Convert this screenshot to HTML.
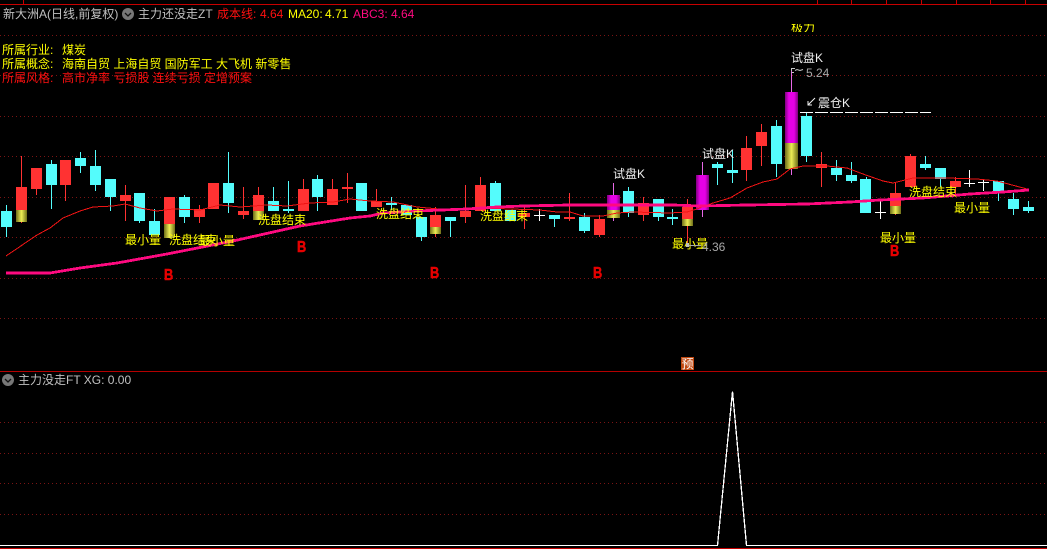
<!DOCTYPE html>
<html><head><meta charset="utf-8">
<style>
html,body{margin:0;padding:0;background:#000;width:1047px;height:549px;overflow:hidden}
svg{display:block;position:absolute;left:0;top:0}
text{font-family:"Liberation Sans","WenQuanYi Zen Hei","Noto Sans CJK SC",sans-serif;font-size:12px;white-space:pre;text-rendering:optimizeSpeed}
.y{fill:#ffff00}.w{fill:#f0f0f0}.g{fill:#c0c0c0}.r{fill:#ff1010}
.b{fill:#e60000;stroke:#e60000;stroke-width:.5;font-size:16px;font-weight:bold}
</style></head><body>
<svg width="1047" height="549" viewBox="0 0 1047 549" xmlns="http://www.w3.org/2000/svg">
<defs>
<linearGradient id="au" x1="0" x2="1" y1="0" y2="0"><stop offset="0" stop-color="#6e6e18"/><stop offset=".5" stop-color="#eeee55"/><stop offset="1" stop-color="#6e6e18"/></linearGradient>
<linearGradient id="mg" x1="0" x2="1" y1="0" y2="0"><stop offset="0" stop-color="#800080"/><stop offset=".3" stop-color="#e600e6"/><stop offset=".7" stop-color="#e600e6"/><stop offset="1" stop-color="#800080"/></linearGradient>
<clipPath id="clipTop"><rect x="780" y="24" width="50" height="8"/></clipPath>
</defs>
<rect width="1047" height="549" fill="#000"/>
<g shape-rendering="crispEdges">
<rect x="0" y="4" width="1047" height="1" fill="#c80000"/>
<path d="M23.500 0V4M817.500 0V4M851.500 0V4M886.500 0V4M921.500 0V4M956.500 0V4M990.500 0V4M1025.500 0V4" stroke="#c80000" fill="none"/>
<rect x="0" y="371" width="1047" height="1" fill="#b40000"/>
<rect x="0" y="548" width="1047" height="1" fill="#c80000"/>
<path d="M0 35.500H1047M0 75.500H1047M0 116.500H1047M0 156.500H1047M0 197.500H1047M0 237.500H1047M0 278.500H1047M0 318.500H1047M0 422.500H1047M0 453.500H1047M0 483.500H1047M0 514.500H1047" stroke="#7a1414" stroke-dasharray="1 3" fill="none"/>
<!-- red wicks -->
<path stroke="#ff3232" fill="none" d="M21.500 156V223M36.500 189V195M65.500 185V201M125.500 185V221M199.500 205V223M243.500 187V219M258.500 187V195M303.500 179V189M332.500 179V189M347.500 173V203M376.500 189V201M435.500 207V237M465.500 185V223M480.500 177V185M524.500 205V229M569.500 193V221M599.500 215V237M643.500 197V221M687.500 199V247M746.500 136V181M761.500 124V166M821.500 152V187M895.500 182V215M910.500 154V156M955.500 177V195"/>
<!-- cyan wicks -->
<path stroke="#54fcfc" fill="none" d="M6.500 205V237M51.500 160V209M80.500 152V173M95.500 150V191M110.500 197V211M139.500 221V223M154.500 209V221M184.500 195V223M228.500 152V213M273.500 187V201M288.500 181V213M317.500 175V211M391.500 197V210M421.500 237V241M450.500 221V237M495.500 181V183M554.500 219V227M584.500 213V233M628.500 187V217M658.500 217V221M672.500 209V225M717.500 162V185M732.500 150V183M776.500 120V177M806.500 112V162M836.500 160V181M851.500 162V183M866.500 177V179M925.500 156V170M940.500 179V187M998.500 192V201M1013.500 193V215M1028.500 201V213"/>
<!-- magenta wicks -->
<path stroke="#e868e8" fill="none" d="M613.500 183V221M702.500 162V217M791.500 68V175"/>
<!-- white crosses -->
<path stroke="#fff" fill="none" d="M539.500 209V221M534 215.500H545M880.500 201V219M875 212.500H886M969.500 170V187M964 183.500H975M983.500 179V191M978 182.500H989"/>
<!-- red bodies -->
<path fill="#ff3232" d="M16 187h11v23h-11zM31 168h11v21h-11zM60 160h11v25h-11zM120 195h11v6h-11zM164 197h11v27h-11zM194 209h11v8h-11zM208 183h11v26h-11zM238 211h11v4h-11zM253 195h11v16h-11zM298 189h11v22h-11zM327 189h11v16h-11zM342 187h11v2h-11zM371 201h11v6h-11zM430 215h11v12h-11zM460 211h11v6h-11zM475 185h11v26h-11zM519 213h11v4h-11zM564 217h11v2h-11zM594 219h11v16h-11zM638 203h11v12h-11zM682 207h11v12h-11zM741 148h11v22h-11zM756 132h11v14h-11zM816 164h11v4h-11zM890 193h11v13h-11zM905 156h11v31h-11zM950 181h11v6h-11z"/>
<!-- cyan bodies -->
<path fill="#54fcfc" d="M1 211h11v16h-11zM46 164h11v21h-11zM75 158h11v8h-11zM90 166h11v19h-11zM105 179h11v18h-11zM134 193h11v28h-11zM149 221h11v14h-11zM179 197h11v20h-11zM223 183h11v20h-11zM268 201h11v10h-11zM283 209h11v2h-11zM312 179h11v18h-11zM356 183h11v28h-11zM386 203h11v2h-11zM401 205h11v10h-11zM416 217h11v20h-11zM445 217h11v4h-11zM490 183h11v28h-11zM505 210h11v11h-11zM549 215h11v4h-11zM579 217h11v14h-11zM623 191h11v22h-11zM653 199h11v18h-11zM667 217h11v2h-11zM712 164h11v4h-11zM727 170h11v3h-11zM771 126h11v38h-11zM801 116h11v40h-11zM831 168h11v7h-11zM846 175h11v6h-11zM860 179h11v34h-11zM920 164h11v4h-11zM935 168h11v11h-11zM993 181h11v11h-11zM1008 199h11v10h-11zM1023 207h11v4h-11z"/>
<!-- magenta bodies -->
<rect x="607" y="195" width="13" height="15" fill="url(#mg)"/>
<rect x="696" y="175" width="13" height="35" fill="url(#mg)"/>
<rect x="785" y="92" width="13" height="51" fill="url(#mg)"/>
<!-- gold -->
<rect x="16" y="210" width="11" height="12" fill="url(#au)"/>
<rect x="164" y="224" width="11" height="14" fill="url(#au)"/>
<rect x="253" y="211" width="11" height="9" fill="url(#au)"/>
<rect x="430" y="227" width="11" height="7" fill="url(#au)"/>
<rect x="607" y="210" width="13" height="8" fill="url(#au)"/>
<rect x="682" y="219" width="11" height="7" fill="url(#au)"/>
<rect x="785" y="143" width="13" height="26" fill="url(#au)"/>
<rect x="890" y="206" width="11" height="8" fill="url(#au)"/>
</g>
<!-- thin MA -->
<polyline shape-rendering="crispEdges" fill="none" stroke="#f01414" stroke-width="1" points="6,256 37,235 50,228 63,218 80,211 93,207 113,206 125,204 140,208 157,211 173,209 200,210 220,205 240,207 267,205 287,206 310,203 333,202 350,199 370,201 393,202 417,207 450,210 483,208 540,210 557,212 570,212 583,216 603,216 617,213 633,212 670,213 687,212 697,209 713,203 730,198 747,188 763,182 777,179 790,169 803,166 827,166 847,168 863,174 883,181 893,183 913,178 947,178 977,179 997,181 1027,189"/>
<!-- thick MA -->
<polyline shape-rendering="crispEdges" fill="none" stroke="#ff0a80" stroke-width="2.800" points="6,273 50,273 80,268 117,263 167,254 233,241 300,226 350,218 370,216 383,213 417,211 467,209 497,207 523,206 570,205 673,205 700,206 747,205 807,204 850,202 880,200 923,198 970,194 1003,192 1029,190"/>
<!-- dashes -->
<path stroke="#fff" fill="none" shape-rendering="crispEdges" d="M800 112.500H931" stroke-dasharray="13 2"/>
<!-- header -->
<text x="3" y="18" class="g">新大洲A(日线,前复权)</text>
<circle cx="128" cy="14" r="6" fill="#777"/>
<path d="M125 13l3 3 3-3" stroke="#111" stroke-width="1.300" fill="none"/>
<text x="138" y="18" class="g">主力还没走ZT</text>
<text x="217" y="18" fill="#ff1010">成本线:</text><text x="260" y="18" fill="#ff1010">4.64</text>
<text x="288" y="18" class="y">MA20:</text><text x="325" y="18" class="y">4.71</text>
<text x="353" y="18" fill="#ff0a80">ABC3:</text><text x="391" y="18" fill="#ff0a80">4.64</text>
<text x="2" y="54" class="y">所属行业:</text><text x="62" y="54" class="y">煤炭</text>
<text x="2" y="68" class="y">所属概念:</text><text x="62" y="68" class="y">海南自贸 上海自贸 国防军工 大飞机 新零售</text>
<text x="2" y="82" class="r">所属风格:</text><text x="62" y="82" class="r">高市净率 亏损股 连续亏损 定增预案</text>
<!-- labels -->
<text x="125" y="244" class="y">最小量</text>
<text x="169" y="244" class="y">洗盘结束</text>
<text x="199" y="245" class="y">最小量</text>
<text x="258" y="224" class="y">洗盘结束</text>
<text x="376" y="218" class="y">洗盘结束</text>
<text x="480" y="220" class="y">洗盘结束</text>
<text x="672" y="248" class="y">最小量</text>
<text x="909" y="196" class="y">洗盘结束</text>
<text x="954" y="212" class="y">最小量</text>
<text x="880" y="242" class="y">最小量</text>
<text x="613" y="178" class="w">试盘K</text>
<text x="702" y="158" class="w">试盘K</text>
<text x="791" y="62" class="w">试盘K</text>
<path d="M815 98l-7 7M808 101v4h4" stroke="#f0f0f0" fill="none"/>
<text x="818" y="107" class="w">震仓K</text>
<text x="791" y="32" class="y" clip-path="url(#clipTop)">极力</text>
<path d="M791.500 68V71M791.500 68.500H795M791.500 72.500H794M795 70.500l2-1 3 1 3-1" stroke="#c8c8c8" fill="none"/>
<text x="806" y="77" fill="#a8a8a8">5.24</text>
<path d="M687 245.500H701" stroke="#a8a8a8" fill="none"/>
<rect x="686" y="243" width="3" height="4" fill="#c0c0c0"/>
<text x="702" y="251" fill="#a8a8a8">4.36</text>
<text transform="translate(164,280) scale(.8,1)" class="b">B</text>
<text transform="translate(297,252) scale(.8,1)" class="b">B</text>
<text transform="translate(430,278) scale(.8,1)" class="b">B</text>
<text transform="translate(593,278) scale(.8,1)" class="b">B</text>
<text transform="translate(890,256) scale(.8,1)" class="b">B</text>
<!-- yu -->
<rect x="681" y="357" width="13" height="13" fill="#c04810"/>
<text x="681.500" y="368" fill="#fff">预</text>
<!-- lower pane -->
<circle cx="8" cy="380" r="6" fill="#777"/>
<path d="M5 379l3 3 3-3" stroke="#111" stroke-width="1.300" fill="none"/>
<text x="18" y="384" class="g">主力没走FT XG: 0.00</text>
<path shape-rendering="crispEdges" d="M0 545.500H717.500L732.500 391.500L746.500 545.500H1047" stroke="#fff" stroke-width="1.300" fill="none"/>
</svg>
</body></html>
